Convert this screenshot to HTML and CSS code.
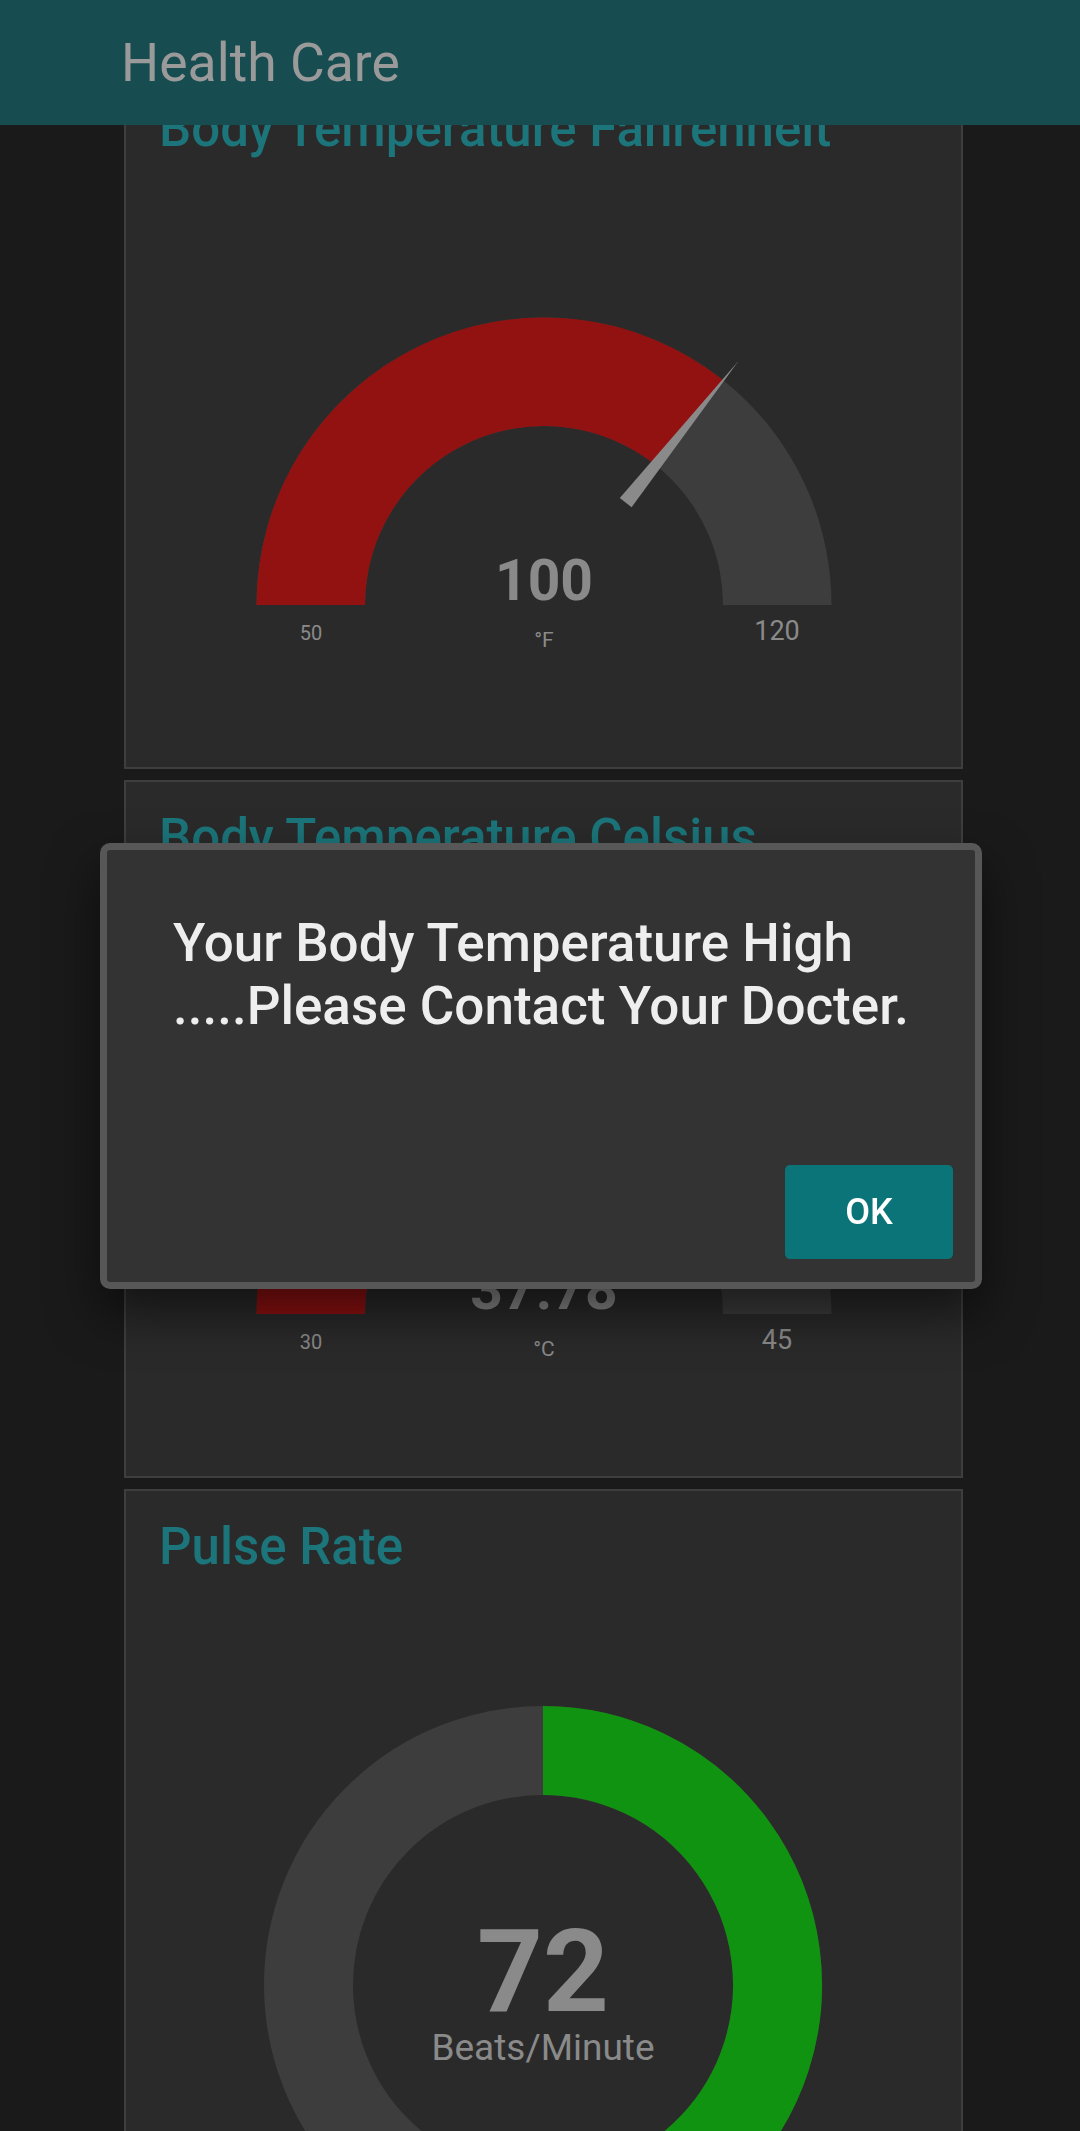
FILE: index.html
```html
<!DOCTYPE html>
<html lang="en">
<head>
<meta charset="utf-8">
<title>Health Care</title>
<link rel="stylesheet" href="styles.css">
</head>
<body>
<header class="appbar">
  <h1 class="appbar-title">Health Care</h1>
</header>

<main class="content">
  <section class="card">
    <h2 class="card-title">Body Temperature Fahrenheit</h2>
    <svg class="gauge" width="835" height="609" viewBox="0 0 835 609">
      <path class="arc-bg" d="M130.5 448 A287.5 287.5 0 0 1 705.5 448 L597 448 A179 179 0 0 0 239 448 Z"/>
      <path class="arc-red" d="M130.5 448 A287.5 287.5 0 0 1 597.3 223.3 L529.6 308.1 A179 179 0 0 0 239 448 Z"/>
      <polygon class="needle" points="505.6,350.3 493.8,340.9 612.5,204.1"/>
      <text class="g-value" x="418" y="443">100</text>
      <text class="g-unit" x="418" y="490">°F</text>
      <text class="g-min" x="185" y="483">50</text>
      <text class="g-max" x="651" y="483">120</text>
    </svg>
  </section>

  <section class="card">
    <h2 class="card-title">Body Temperature Celsius</h2>
    <svg class="gauge" width="835" height="609" viewBox="0 0 835 609">
      <path class="arc-bg" d="M130.5 448 A287.5 287.5 0 0 1 705.5 448 L597 448 A179 179 0 0 0 239 448 Z"/>
      <path class="arc-red" d="M130.5 448 A287.5 287.5 0 0 1 434.9 161 L428.5 269.3 A179 179 0 0 0 239 448 Z"/>
      <polygon class="needle" points="433.2,317.6 418.2,316.8 436.3,136.5"/>
      <text class="g-value" x="418" y="443">37.78</text>
      <text class="g-unit" x="418" y="490">°C</text>
      <text class="g-min" x="185" y="483">30</text>
      <text class="g-max" x="651" y="483">45</text>
    </svg>
  </section>

  <section class="card">
    <h2 class="card-title">Pulse Rate</h2>
    <svg class="gauge" width="835" height="640" viewBox="0 0 835 640">
      <circle class="ring-bg" cx="417" cy="410" r="234.5"/>
      <path class="ring-green" d="M417 175.5 A234.5 234.5 0 1 1 279.2 599.7"/>
      <text class="d-value" x="417" y="436">72</text>
      <text class="d-unit" x="417" y="485">Beats/Minute</text>
    </svg>
  </section>
</main>

<div class="dialog" role="alertdialog">
  <p class="dialog-msg">Your Body Temperature High<br>.....Please Contact Your Docter.</p>
  <div class="dialog-actions">
    <button class="dialog-btn" type="button">OK</button>
  </div>
</div>
</body>
</html>
```

FILE: styles.css
```css
html, body {
  margin: 0;
  padding: 0;
}

body {
  background: #1a1a1a;
  font-family: Roboto, "Liberation Sans", sans-serif;
  height: 2131px;
  overflow: hidden;
}

.appbar {
  position: fixed;
  top: 0;
  left: 0;
  right: 0;
  height: 125px;
  background: #174c50;
  display: flex;
  align-items: center;
  z-index: 5;
}

.appbar-title {
  margin: 0 0 0 121px;
  font-size: 53.5px;
  font-weight: 400;
  color: #9a9a9a;
  line-height: 1;
}

.content {
  display: flex;
  flex-direction: column;
  gap: 11px;
  padding: 71px 0 0 124px;
}

.card {
  width: 835px;
  height: 694px;
  background: #2a2a2a;
  border: 2px solid #3e3e3e;
  overflow: hidden;
  flex-shrink: 0;
}

.card-title {
  margin: 0;
  padding: 28px 0 0 33px;
  font-size: 51px;
  font-weight: 500;
  line-height: 56px;
  color: #1b757a;
}

.gauge {
  display: block;
}

.arc-bg { fill: #3d3d3d; }
.arc-red { fill: #921111; }
.needle { fill: #8a8a8a; }

.g-value {
  font-family: Roboto, sans-serif;
  font-weight: 700;
  font-size: 57px;
  fill: #8a8a8a;
  text-anchor: middle;
}

.g-unit {
  font-family: Roboto, sans-serif;
  font-size: 21px;
  fill: #8a8a8a;
  text-anchor: middle;
}

.g-min {
  font-family: Roboto, sans-serif;
  font-size: 20px;
  fill: #8a8a8a;
  text-anchor: middle;
}

.g-max {
  font-family: Roboto, sans-serif;
  font-size: 27px;
  fill: #8a8a8a;
  text-anchor: middle;
}

.ring-bg {
  fill: none;
  stroke: #3d3d3d;
  stroke-width: 89;
}

.ring-green {
  fill: none;
  stroke: #109310;
  stroke-width: 89;
}

.d-value {
  font-family: Roboto, sans-serif;
  font-weight: 700;
  font-size: 115px;
  fill: #8a8a8a;
  text-anchor: middle;
}

.d-unit {
  font-family: Roboto, sans-serif;
  font-size: 37px;
  fill: #8a8a8a;
  text-anchor: middle;
}

.dialog {
  position: fixed;
  left: 100px;
  top: 843px;
  width: 868px;
  height: 432px;
  background: #333333;
  border: 7px solid #575757;
  border-radius: 10px;
  box-shadow: 0 24px 50px rgba(0, 0, 0, 0.55);
  display: flex;
  flex-direction: column;
  z-index: 10;
}

.dialog-msg {
  margin: 0;
  padding: 62px 30px 0 66px;
  font-size: 53px;
  font-weight: 500;
  line-height: 63px;
  color: #eeeeee;
}

.dialog-actions {
  margin-top: auto;
  display: flex;
  justify-content: flex-end;
  padding: 0 22px 23px 0;
}

.dialog-btn {
  width: 168px;
  height: 94px;
  background: #0b7479;
  color: #ffffff;
  border: 0;
  border-radius: 5px;
  font-family: Roboto, sans-serif;
  font-size: 36px;
  font-weight: 500;
  padding: 0;
}
```
